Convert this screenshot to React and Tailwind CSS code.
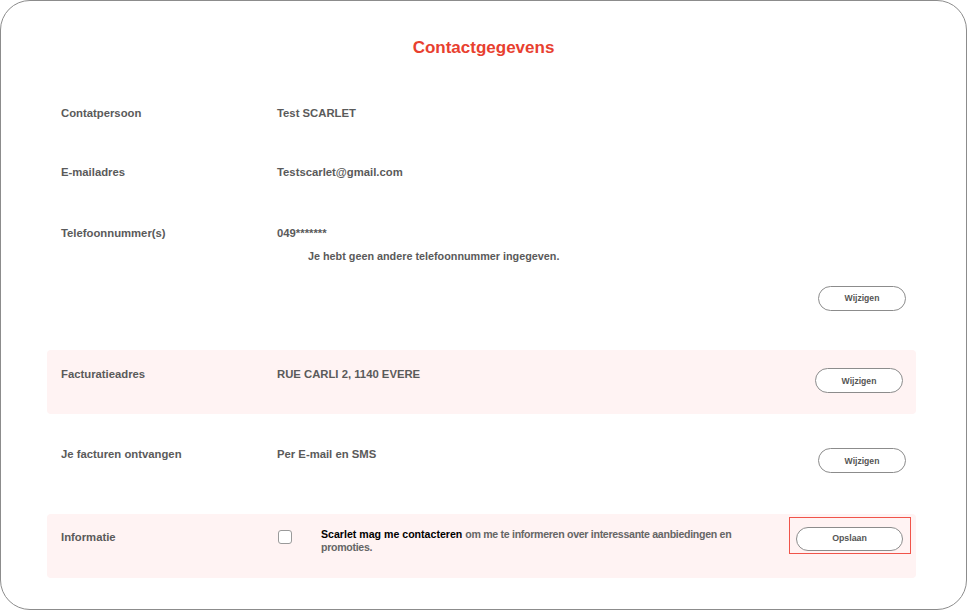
import React from "react";

function PillButton({ label, className = "" }) {
  return (
    <button
      className={`h-[25px] w-[88px] rounded-full border border-[#8c8c8c] bg-white text-[8.6px] font-bold text-[#555] ${className}`}
    >
      {label}
    </button>
  );
}

export default function App() {
  return (
    <div
      className="w-[967px] h-[611px] bg-white"
      style={{ fontFamily: '"Liberation Sans", Arial, sans-serif' }}
    >
      <div className="h-[610px] border border-[#8c8c8c] rounded-[30px] flex flex-col">
        <h1 className="mt-[37px] h-[20px] leading-[20px] text-center text-[17px] font-bold text-[#e8402f]">
          Contactgegevens
        </h1>

        {/* Contactpersoon */}
        <div className="ml-[46px] mr-[50px] px-[14px] mt-[48px] flex leading-[14px] text-[11.3px] font-bold text-[#5a5a5a]">
          <div className="w-[216px]">Contatpersoon</div>
          <div>Test SCARLET</div>
        </div>

        {/* E-mail */}
        <div className="ml-[46px] mr-[50px] px-[14px] mt-[45px] flex leading-[14px] text-[11.3px] font-bold text-[#5a5a5a]">
          <div className="w-[216px]">E-mailadres</div>
          <div>Testscarlet@gmail.com</div>
        </div>

        {/* Telefoon */}
        <div className="ml-[46px] mr-[50px] px-[14px] mt-[47px] flex leading-[14px] text-[11.3px] font-bold text-[#5a5a5a]">
          <div className="w-[216px]">Telefoonnummer(s)</div>
          <div className="flex flex-col">
            <div>049*******</div>
            <div className="mt-[9px] ml-[31px] text-[10.8px]">
              Je hebt geen andere telefoonnummer ingegeven.
            </div>
          </div>
        </div>

        <div className="ml-[46px] mr-[50px] pr-[10px] mt-[23px] flex justify-end">
          <PillButton label="Wijzigen" />
        </div>

        {/* Facturatieadres */}
        <div className="ml-[46px] mr-[50px] mt-[39px] h-[64px] rounded-[4px] bg-[#fff3f3] pl-[14px] pr-[13px] pt-[17px] flex items-start leading-[14px] text-[11.3px] font-bold text-[#5a5a5a]">
          <div className="w-[216px]">Facturatieadres</div>
          <div>RUE CARLI 2, 1140 EVERE</div>
          <PillButton label="Wijzigen" className="ml-auto mt-[1px] h-[24px]" />
        </div>

        {/* Facturen */}
        <div className="ml-[46px] mr-[50px] pl-[14px] pr-[10px] mt-[33px] flex items-start leading-[14px] text-[11.3px] font-bold text-[#5a5a5a]">
          <div className="w-[216px]">Je facturen ontvangen</div>
          <div>Per E-mail en SMS</div>
          <PillButton label="Wijzigen" className="ml-auto mt-[1px]" />
        </div>

        {/* Informatie */}
        <div className="ml-[46px] mr-[50px] mt-[41px] h-[64px] rounded-[4px] bg-[#fff3f3] pl-[14px] pr-[5px] pt-[3px] flex items-start">
          <div className="w-[216px] mt-[13px] leading-[14px] text-[11.3px] font-bold text-[#5a5a5a]">
            Informatie
          </div>
          <div className="mt-[13px] ml-[1px] h-[14px] w-[14px] rounded-[3px] border border-[#9a9a9a] bg-white" />
          <div className="ml-[29px] mt-[11px] w-[420px] leading-[13px] text-[10.6px] font-bold text-[#666]">
            <span className="text-black">Scarlet mag me contacteren</span>{" "}
            <span className="tracking-[-0.3px]">
              om me te informeren over interessante aanbiedingen en promoties.
            </span>
          </div>
          <div className="ml-auto h-[37px] w-[122px] border border-[#f0544a] pl-[6px] pt-[6px]">
            <button className="h-[24px] w-[107px] rounded-full border border-[#8c8c8c] bg-white text-[8.8px] font-bold text-[#555]">
              Opslaan
            </button>
          </div>
        </div>
      </div>
    </div>
  );
}
